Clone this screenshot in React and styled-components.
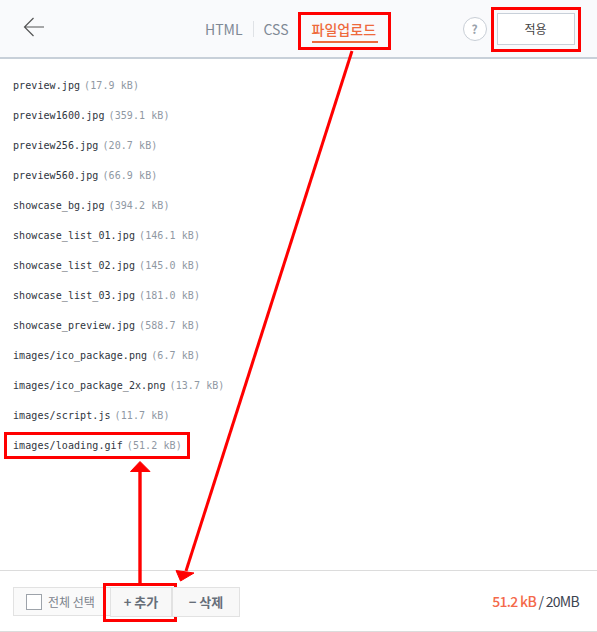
import React from 'react'
import styled, { createGlobalStyle } from 'styled-components'

const files = [
    ['preview.jpg', '17.9 kB'],
    ['preview1600.jpg', '359.1 kB'],
    ['preview256.jpg', '20.7 kB'],
    ['preview560.jpg', '66.9 kB'],
    ['showcase_bg.jpg', '394.2 kB'],
    ['showcase_list_01.jpg', '146.1 kB'],
    ['showcase_list_02.jpg', '145.0 kB'],
    ['showcase_list_03.jpg', '181.0 kB'],
    ['showcase_preview.jpg', '588.7 kB'],
    ['images/ico_package.png', '6.7 kB'],
    ['images/ico_package_2x.png', '13.7 kB'],
    ['images/script.js', '11.7 kB'],
    ['images/loading.gif', '51.2 kB'],
]

function App() {
    return (
        <Page>
            <GlobalStyle />
            <Header>
                <BackIcon width="22" height="20" viewBox="0 0 22 20">
                    <path d="M21 10H1.5M10.5 1L1.5 10l9 9" fill="none" stroke="#555" strokeWidth="1.2" />
                </BackIcon>
                <Tabs>
                    <Tab>HTML</Tab>
                    <Divider />
                    <Tab>CSS</Tab>
                    <Divider $after={12} />
                    <ActiveTab>
                        파일업로드
                        <Callout $left={-14} $top={-5} $width={93} $height={38} />
                    </ActiveTab>
                </Tabs>
                <Help>?</Help>
                <ApplyButton>
                    적용
                    <Callout $left={-7} $top={-7} $width={90} $height={45} />
                </ApplyButton>
            </Header>
            <FileList>
                {files.map(([name, size]) => (
                    <FileRow key={name}>
                        {name}<FileSize>({size})</FileSize>
                        {name === 'images/loading.gif' && <Callout $left={4} $top={1} $width={186} $height={27} />}
                    </FileRow>
                ))}
            </FileList>
            <Footer>
                <ButtonGroup>
                    <SelectAll>
                        <CheckBox />
                        전체 선택
                    </SelectAll>
                    <FooterButton $width={62}>
                        + 추가
                        <Callout $left={-8} $top={-5} $width={74} $height={39} />
                    </FooterButton>
                    <FooterButton $width={68}>− 삭제</FooterButton>
                </ButtonGroup>
                <Usage><UsedSize>51.2 kB</UsedSize> / 20MB</Usage>
            </Footer>
            <Arrows width="597" height="632" viewBox="0 0 597 632">
                <path d="M352 51L186 571" stroke="#f00" strokeWidth="3" fill="none" />
                <path d="M176 570.5L194 573L180.5 581Z" fill="#f00" stroke="#f00" strokeWidth="1" />
                <path d="M140 583V471" stroke="#f00" strokeWidth="3.4" fill="none" />
                <path d="M130.5 471.5L140 461.5L150 471.5Z" fill="#f00" stroke="#f00" strokeWidth="1" />
            </Arrows>
        </Page>
    )
}

const GlobalStyle = createGlobalStyle`
    html, body {
        margin: 0;
        padding: 0;
        background: #fff;
    }
    body {
        font-family: "Noto Sans CJK KR", "Noto Sans", sans-serif;
    }
`

const Page = styled.div`
    position: relative;
    width: 597px;
    height: 632px;
    display: flex;
    flex-direction: column;
    overflow: hidden;
`

const Callout = styled.span`
    position: absolute;
    left: ${props => props.$left}px;
    top: ${props => props.$top}px;
    width: ${props => props.$width}px;
    height: ${props => props.$height}px;
    box-sizing: border-box;
    border: 3px solid #f00;
    pointer-events: none;
`

const Arrows = styled.svg`
    position: absolute;
    left: 0;
    top: 0;
    pointer-events: none;
`

const Header = styled.header`
    height: 57px;
    flex: none;
    display: flex;
    align-items: center;
    background: #f9fafc;
    border-bottom: 2px solid #c8d0d9;
    padding: 0 22px 0 23px;
`

const BackIcon = styled.svg`
    flex: none;
    margin-top: -3px;
`

const Tabs = styled.nav`
    display: flex;
    align-items: center;
    margin-left: 160px;
    height: 30px;
`

const Tab = styled.span`
    font-size: 14px;
    color: #7f8995;
    line-height: 30px;
`

const Divider = styled.i`
    width: 1px;
    height: 16px;
    background: #dfe2e6;
    margin: 0 ${props => props.$after || 10}px 0 10px;
`

const ActiveTab = styled.span`
    position: relative;
    font-size: 14px;
    font-weight: 500;
    color: #ee6a3c;
    line-height: 24px;
    margin-top: 2px;
    border-bottom: 2px solid #ee6a3c;
    width: 66px;
    white-space: nowrap;
`

const Help = styled.span`
    width: 24px;
    height: 24px;
    box-sizing: border-box;
    border: 1px solid #c8ced6;
    border-radius: 50%;
    background: #fff;
    color: #9aa2ac;
    font-size: 12px;
    font-weight: 700;
    display: flex;
    align-items: center;
    justify-content: center;
    margin-left: 85px;
    flex: none;
`

const ApplyButton = styled.span`
    position: relative;
    width: 78px;
    height: 32px;
    box-sizing: border-box;
    border: 1px solid #c8d0d9;
    background: #fff;
    color: #444;
    font-size: 12px;
    display: flex;
    align-items: center;
    justify-content: center;
    margin-left: 10px;
    flex: none;
`

const FileList = styled.ul`
    flex: 1;
    list-style: none;
    margin: 0;
    padding: 12px 0 0;
`

const FileRow = styled.li`
    height: 30px;
    padding-left: 13px;
    position: relative;
    font-family: "DejaVu Sans Mono", monospace;
    font-size: 10px;
    letter-spacing: 0.08px;
    line-height: 30px;
    color: #2f3540;
    white-space: nowrap;
`

const FileSize = styled.span`
    color: #8f98a3;
    margin-left: 4px;
`

const Footer = styled.footer`
    height: 60px;
    flex: none;
    display: flex;
    align-items: center;
    justify-content: space-between;
    border-top: 1px solid #dcdcdc;
    border-bottom: 1px solid #dcdcdc;
    padding: 0 18px 0 13px;
`

const ButtonGroup = styled.div`
    display: flex;
    align-items: center;
    padding-top: 1px;
`

const SelectAll = styled.label`
    width: 97px;
    height: 29px;
    box-sizing: border-box;
    display: flex;
    align-items: center;
    gap: 6px;
    padding-left: 12px;
    border: 1px solid #e2e2e2;
    border-right: 0;
    color: #7a828c;
    font-size: 12px;
    background: #fafafa;
`

const CheckBox = styled.span`
    width: 16px;
    height: 16px;
    box-sizing: border-box;
    border: 1px solid #9da3aa;
    background: #fff;
`

const FooterButton = styled.span`
    position: relative;
    width: ${props => props.$width}px;
    height: 30px;
    box-sizing: border-box;
    display: flex;
    align-items: center;
    justify-content: center;
    border: 1px solid #e2e2e2;
    background: #f8f8f8;
    color: #666e78;
    font-size: 13px;
    font-weight: 700;
`

const Usage = styled.span`
    font-size: 14px;
    color: #3d4450;
    letter-spacing: -0.7px;
`

const UsedSize = styled.b`
    font-weight: 500;
    color: #f4694a;
`

export default App
